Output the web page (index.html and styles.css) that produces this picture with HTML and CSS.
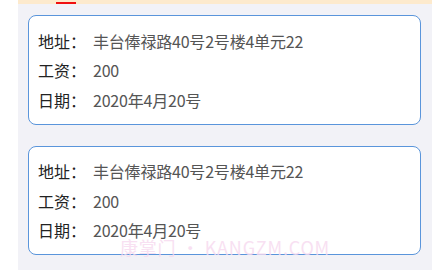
FILE: index.html
```html
<!DOCTYPE html>
<html lang="zh">
<head>
<meta charset="utf-8">
<link rel="stylesheet" href="styles.css">
</head>
<body>
<div class="page">
  <div class="tabbar"><span class="tab-indicator"></span></div>
  <div class="list">
    <div class="card">
      <div class="row"><span class="label">地址：</span><span class="value">丰台俸禄路40号2号楼4单元22</span></div>
      <div class="row"><span class="label">工资：</span><span class="value">200</span></div>
      <div class="row"><span class="label">日期：</span><span class="value">2020年4月20号</span></div>
    </div>
    <div class="card">
      <div class="row"><span class="label">地址：</span><span class="value">丰台俸禄路40号2号楼4单元22</span></div>
      <div class="row"><span class="label">工资：</span><span class="value">200</span></div>
      <div class="row"><span class="label">日期：</span><span class="value">2020年4月20号</span></div>
    </div>
  </div>
  <div class="watermark">康掌门 • KANGZM.COM</div>
</div>
</body>
</html>
```
FILE: styles.css
```css
html, body {
  margin: 0;
  padding: 0;
  background: #ffffff;
}
body {
  font-family: "Noto Sans CJK SC", "Noto Sans", sans-serif;
}
.page {
  position: relative;
  margin-left: 18px;
  width: 414px;
  height: 270px;
  background: #f2f2f7;
}
.tabbar {
  height: 4px;
  background: #fdeacd;
  position: relative;
}
.tab-indicator {
  position: absolute;
  left: 38px;
  top: 2px;
  width: 20px;
  height: 2px;
  background: #f01010;
}
.list {
  display: flex;
  flex-direction: column;
  gap: 21px;
  padding: 11px 11px 0 10px;
}
.card {
  background: #ffffff;
  border: 1px solid #5a95db;
  border-radius: 8px;
  padding: 10px 9px 9px;
  display: flex;
  flex-direction: column;
}
.row {
  display: flex;
  height: 29.5px;
  align-items: center;
  font-size: 16px;
}
.label {
  width: 55px;
  color: #222222;
}
.value {
  color: #555555;
  letter-spacing: -0.2px;
}
.watermark {
  position: absolute;
  left: 102px;
  top: 236px;
  font-size: 18px;
  line-height: 22px;
  color: #f7d9ef;
  opacity: 0.8;
  letter-spacing: 0.8px;
}
```
